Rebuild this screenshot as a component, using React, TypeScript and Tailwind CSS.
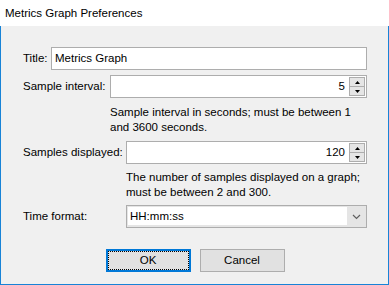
export default function App() {
  return (
    <div className="flex h-[285px] w-[389px] flex-col whitespace-nowrap font-['Liberation_Sans',Arial,sans-serif] text-[11.5px] leading-[15px] text-black">
      <div className="flex h-[26px] items-center bg-white pl-[5px]">Metrics Graph Preferences</div>

      <div className="flex flex-1 flex-col border-x border-b border-[#1883d7] bg-[#f0f0f0] pl-[22px] pr-[21px] pt-[21px]">
        <div className="flex h-[23px] items-center">
          <span className="w-[28px] shrink-0">Title:</span>
          <div className="flex h-full flex-1 items-center border border-[#adadad] bg-white pl-[3px]">Metrics Graph</div>
        </div>

        <div className="mt-[5px] flex h-[23px] items-center">
          <span className="w-[87px] shrink-0">Sample interval:</span>
          <SpinBox value="5" />
        </div>

        <div className="mt-[7px] pl-[87px]">
          <div>Sample interval in seconds; must be between 1</div>
          <div>and 3600 seconds.</div>
        </div>

        <div className="mt-[6px] flex h-[23px] items-center">
          <span className="w-[103px] shrink-0">Samples displayed:</span>
          <SpinBox value="120" />
        </div>

        <div className="mt-[6px] pl-[103px]">
          <div>The number of samples displayed on a graph;</div>
          <div>must be between 2 and 300.</div>
        </div>

        <div className="mt-[5px] flex h-[23px] items-center">
          <span className="w-[103px] shrink-0">Time format:</span>
          <div className="flex h-full flex-1 border border-[#adadad] bg-[#e5e5e5] pt-[1px]">
            <div className="ml-[1px] flex h-[18px] flex-1 items-center bg-white pl-[2px]">HH:mm:ss</div>
            <div className="flex w-[19px] items-center justify-center pb-[1px]">
              <svg width="9" height="6" viewBox="0 0 9 6">
                <path d="M1 1 L4.5 4.5 L8 1" fill="none" stroke="#606060" strokeWidth="1.2" />
              </svg>
            </div>
          </div>
        </div>

        <div className="mt-[21px] flex justify-center gap-[9px]">
          <button className="h-[23px] w-[85px] border-2 border-[#0078d7] bg-[#e1e1e1] outline-1 outline-dotted outline-black outline-offset-[-3px]">
            OK
          </button>
          <button className="h-[23px] w-[85px] border border-[#adadad] bg-[#e1e1e1]">Cancel</button>
        </div>
      </div>
    </div>
  );
}

function SpinBox({ value }: { value: string }) {
  return (
    <div className="flex h-full flex-1 items-center border border-[#adadad] bg-white">
      <div className="flex-1 pr-[4px] text-right">{value}</div>
      <div className="mr-[1px] flex h-[19px] w-[16px] flex-col">
        <div className="flex h-[10px] items-center justify-center border border-[#adadad] bg-[#e5e5e5]">
          <svg width="5" height="3" viewBox="0 0 5 3">
            <path d="M0 3 L2.5 0 L5 3 Z" fill="#000" />
          </svg>
        </div>
        <div className="-mt-px flex h-[10px] items-center justify-center border border-[#adadad] bg-[#e5e5e5]">
          <svg width="5" height="3" viewBox="0 0 5 3">
            <path d="M0 0 L2.5 3 L5 0 Z" fill="#000" />
          </svg>
        </div>
      </div>
    </div>
  );
}
